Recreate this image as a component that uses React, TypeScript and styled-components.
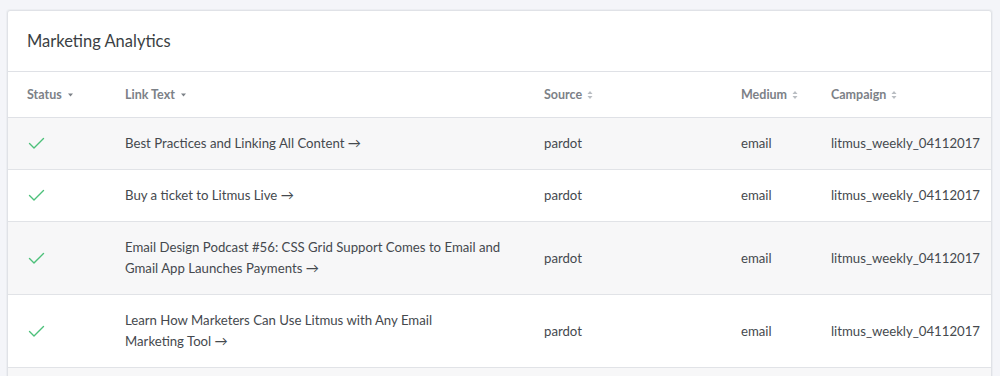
import React from 'react';
import styled, { createGlobalStyle } from 'styled-components';

const GlobalStyle = createGlobalStyle`
  body {
    margin: 0;
    background: #f4f5f9;
    font-family: Lato, "Open Sans", sans-serif;
    -webkit-font-smoothing: antialiased;
  }
`;

// link text is split the way the original table wraps it
const rows = [
  { lines: ['Best Practices and Linking All Content'], source: 'pardot', medium: 'email', campaign: 'litmus_weekly_04112017' },
  { lines: ['Buy a ticket to Litmus Live'], source: 'pardot', medium: 'email', campaign: 'litmus_weekly_04112017' },
  { lines: ['Email Design Podcast #56: CSS Grid Support Comes to Email and', 'Gmail App Launches Payments'], source: 'pardot', medium: 'email', campaign: 'litmus_weekly_04112017' },
  { lines: ['Learn How Marketers Can Use Litmus with Any Email', 'Marketing Tool'], source: 'pardot', medium: 'email', campaign: 'litmus_weekly_04112017' },
  { lines: ['Litmus Live London'], source: 'pardot', medium: 'email', campaign: 'litmus_weekly_04112017' },
];

const Check = () => (
  <svg width="17" height="13" viewBox="0 0 17 13" fill="none">
    <path d="M1.5 6.5 L6 11 L15.5 1.5" stroke="#4cc07a" strokeWidth="1.4" strokeLinecap="round" strokeLinejoin="round" />
  </svg>
);

const Caret = () => (
  <svg width="7" height="4" viewBox="0 0 7 4">
    <path d="M1 0.5 L6 0.5 L3.5 3.5 Z" fill="#7c8187" />
  </svg>
);

const SortBoth = () => (
  <svg width="6" height="10" viewBox="0 0 6 10">
    <path d="M0.5 4 L5.5 4 L3 1 Z" fill="#b9bdc2" />
    <path d="M0.5 6 L5.5 6 L3 9 Z" fill="#b9bdc2" />
  </svg>
);

export default function App() {
  return (
    <>
      <GlobalStyle />
      <Card>
        <CardHeader>Marketing Analytics</CardHeader>
        <HeadRow>
          <HeadCell>Status <Caret /></HeadCell>
          <HeadCell>Link Text <Caret /></HeadCell>
          <HeadCell>Source <SortBoth /></HeadCell>
          <HeadCell>Medium <SortBoth /></HeadCell>
          <HeadCell>Campaign <SortBoth /></HeadCell>
        </HeadRow>
        {rows.map((r, i) => (
          <Row key={i} $striped={i % 2 === 0}>
            <StatusCell><Check /></StatusCell>
            <Cell>
              {r.lines.map((l, j) => (
                <Line key={j}>{l}{j === r.lines.length - 1 ? ' →' : ''}</Line>
              ))}
            </Cell>
            <Cell>{r.source}</Cell>
            <Cell>{r.medium}</Cell>
            <Cell>{r.campaign}</Cell>
          </Row>
        ))}
      </Card>
    </>
  );
}

const Card = styled.div`
  margin: 10px 0 0 7px;
  width: 983px;
  background: #ffffff;
  border: 1px solid #e0e2e7;
  border-radius: 3px;
  box-shadow: 0 0 0 1px #eceef2;
`;

const CardHeader = styled.div`
  height: 60px;
  padding-left: 19px;
  display: flex;
  align-items: center;
  font-size: 16.5px;
  color: #3b3f44;
  border-bottom: 1px solid #dfe1e6;
`;

const grid = `
  display: grid;
  grid-template-columns: 98px 419px 197px 90px 1fr;
  padding-left: 19px;
`;

const HeadRow = styled.div`
  ${grid}
  height: 45px;
  align-items: center;
  border-bottom: 1px solid #dfe1e6;
`;

const HeadCell = styled.div`
  display: flex;
  align-items: center;
  gap: 5px;
  font-size: 12.5px;
  font-weight: 700;
  color: #7c8187;
`;

const Row = styled.div<{ $striped: boolean }>`
  ${grid}
  align-items: center;
  background: ${p => (p.$striped ? '#f7f7f8' : '#ffffff')};
  border-bottom: 1px solid #e1e3e7;
  font-size: 13.2px;
  color: #45494e;
  line-height: 21px;
`;

const Cell = styled.div`
  padding: 15px 0;
`;

const StatusCell = styled(Cell)`
  display: flex;
  align-items: center;
  padding-left: 1px;
`;

const Line = styled.div`
  white-space: nowrap;
`;
